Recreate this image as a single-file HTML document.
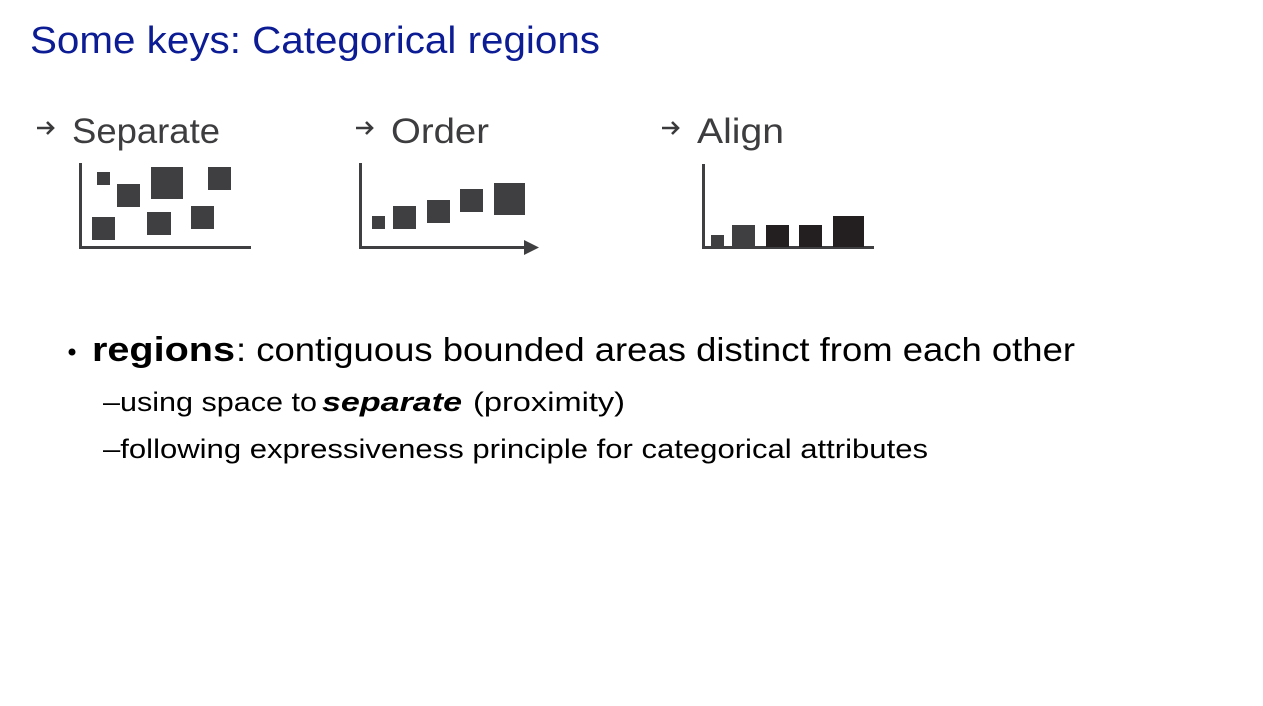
<!DOCTYPE html>
<html><head><meta charset="utf-8"><style>
html,body{margin:0;padding:0;background:#fff;width:1263px;height:706px;overflow:hidden}
svg{display:block}
text{font-family:"Liberation Sans",sans-serif}
</style></head><body>
<svg width="1263" height="706" viewBox="0 0 1263 706">
<text x="30" y="53" font-size="38" fill="#0c1c94" textLength="570" lengthAdjust="spacingAndGlyphs">Some keys: Categorical regions</text>

<g fill="none" stroke="#3a3a3c" stroke-width="2.6">
<path d="M37 128h15M47 122l6 6-6 6"/>
<path d="M356 128h15M366 122l6 6-6 6"/>
<path d="M662 128h15M672 122l6 6-6 6"/>
</g>
<g fill="#3d3d3f" font-size="35">
<text x="72" y="143" textLength="148" lengthAdjust="spacingAndGlyphs">Separate</text>
<text x="391" y="143" textLength="98" lengthAdjust="spacingAndGlyphs">Order</text>
<text x="697" y="143" textLength="87" lengthAdjust="spacingAndGlyphs">Align</text>
</g>

<g fill="#3f3f41">
<rect x="79" y="163" width="3" height="86"/><rect x="79" y="246" width="172" height="3"/>
<rect x="97" y="172" width="13" height="13"/>
<rect x="117" y="184" width="23" height="23"/>
<rect x="151" y="167" width="32" height="32"/>
<rect x="208" y="167" width="23" height="23"/>
<rect x="92" y="217" width="23" height="23"/>
<rect x="147" y="212" width="24" height="23"/>
<rect x="191" y="206" width="23" height="23"/>

<rect x="359" y="163" width="3" height="86"/><rect x="359" y="246" width="168" height="3"/>
<path d="M524 240L539 247.5 524 255z"/>
<rect x="372" y="216" width="13" height="13"/>
<rect x="393" y="206" width="23" height="23"/>
<rect x="427" y="200" width="23" height="23"/>
<rect x="460" y="189" width="23" height="23"/>
<rect x="494" y="183" width="31" height="32"/>

<rect x="702" y="164" width="3" height="85"/><rect x="702" y="246" width="172" height="3"/>
<rect x="711" y="235" width="13" height="12"/>
<rect x="732" y="225" width="23" height="22"/>
</g>
<g fill="#231f20">
<rect x="766" y="225" width="23" height="22"/>
<rect x="799" y="225" width="23" height="22"/>
<rect x="833" y="216" width="31" height="31"/>
</g>

<g fill="#000">
<circle cx="72" cy="352" r="3.5"/>
<text x="92" y="361" font-size="34" font-weight="bold" textLength="143" lengthAdjust="spacingAndGlyphs">regions</text>
<text x="236" y="361" font-size="33" textLength="839" lengthAdjust="spacingAndGlyphs">: contiguous bounded areas distinct from each other</text>
<text x="103" y="411" font-size="27" textLength="214" lengthAdjust="spacingAndGlyphs">–using space to</text>
<text x="322" y="411" font-size="27" font-weight="bold" font-style="italic" textLength="140" lengthAdjust="spacingAndGlyphs">separate</text>
<text x="473" y="411" font-size="27" textLength="152" lengthAdjust="spacingAndGlyphs">(proximity)</text>
<text x="103" y="458" font-size="27" textLength="825" lengthAdjust="spacingAndGlyphs">–following expressiveness principle for categorical attributes</text>
</g>
</svg>
</body></html>
